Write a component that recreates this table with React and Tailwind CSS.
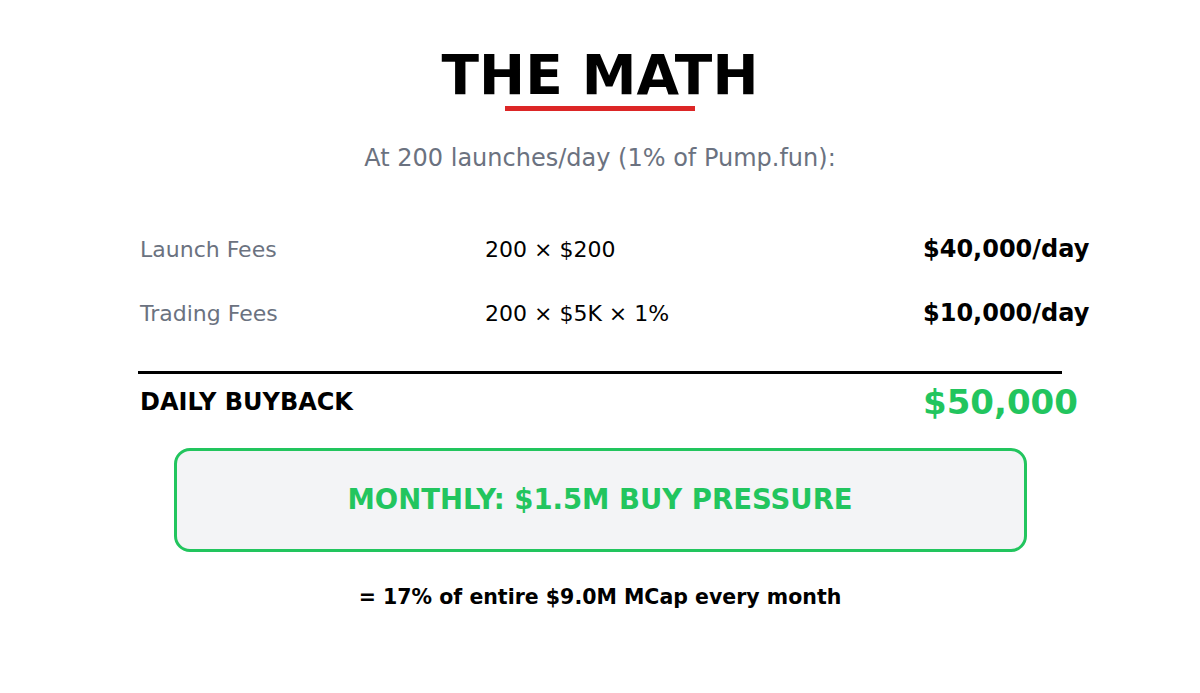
export default function App() {
  const rows = [
    { label: "Launch Fees", calc: "200 × $200", value: "$40,000/day" },
    { label: "Trading Fees", calc: "200 × $5K × 1%", value: "$10,000/day" },
  ];

  return (
    <div className="w-[1200px] h-[693px] bg-white font-['DejaVu_Sans',sans-serif] flex flex-col items-center pt-[45px]">
      <h1 className="text-[55px] leading-[60px] font-bold text-black">THE MATH</h1>
      <div className="mt-[1px] h-[5px] w-[190px] bg-[#dc2626]" />
      <p className="mt-[35px] text-[24px] leading-[24px] text-[#6b7280]">
        At 200 launches/day (1% of Pump.fun):
      </p>

      <div className="mt-[47px] w-[924px]">
        {rows.map((row) => (
          <div
            key={row.label}
            className="grid grid-cols-[347px_438px_1fr] h-[64px] items-center"
          >
            <span className="pl-[2px] text-[22px] text-[#6b7280] whitespace-nowrap">{row.label}</span>
            <span className="text-[22px] text-black whitespace-nowrap">{row.calc}</span>
            <span className="text-[24px] font-bold text-black whitespace-nowrap">{row.value}</span>
          </div>
        ))}

        <div className="mt-[26px] h-[3px] bg-black" />

        <div className="grid grid-cols-[785px_1fr] h-[56px] items-center">
          <span className="pl-[2px] text-[24px] font-bold text-black">DAILY BUYBACK</span>
          <span className="text-[34px] font-bold text-[#22c55e] whitespace-nowrap">$50,000</span>
        </div>
      </div>

      <div className="mt-[18px] w-[853px] h-[104px] rounded-[16px] border-[3px] border-[#22c55e] bg-[#f3f4f6] flex items-center justify-center">
        <span className="text-[27.5px] font-bold text-[#22c55e]">MONTHLY: $1.5M BUY PRESSURE</span>
      </div>

      <p className="mt-[35px] text-[20.5px] leading-[20px] font-bold text-black">
        = 17% of entire $9.0M MCap every month
      </p>
    </div>
  );
}
